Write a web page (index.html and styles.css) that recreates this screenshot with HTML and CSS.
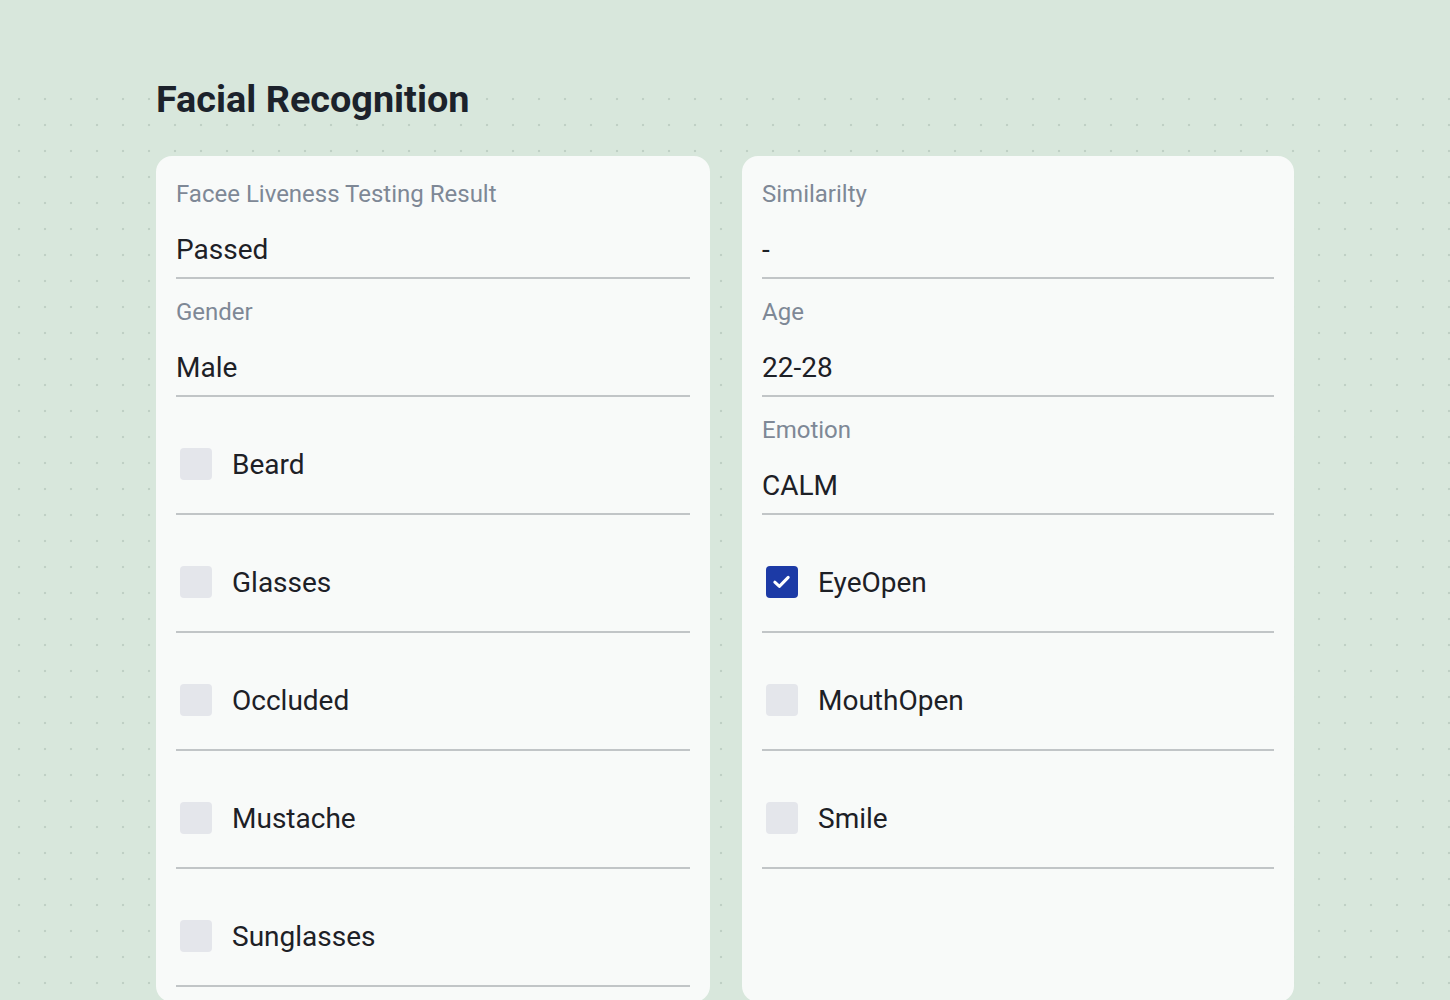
FILE: index.html
```html
<!DOCTYPE html>
<html>
<head>
<meta charset="utf-8">
<link rel="stylesheet" href="styles.css">
</head>
<body>
<div class="dots"></div>
<main class="page">
  <h1 class="title">Facial Recognition</h1>
  <div class="cards">
    <section class="card">
      <div class="field"><div class="label">Facee Liveness Testing Result</div><div class="value">Passed</div></div>
      <div class="field"><div class="label">Gender</div><div class="value">Male</div></div>
      <div class="check"><span class="box"></span><span class="ctext">Beard</span></div>
      <div class="check"><span class="box"></span><span class="ctext">Glasses</span></div>
      <div class="check"><span class="box"></span><span class="ctext">Occluded</span></div>
      <div class="check"><span class="box"></span><span class="ctext">Mustache</span></div>
      <div class="check"><span class="box"></span><span class="ctext">Sunglasses</span></div>
    </section>
    <section class="card">
      <div class="field"><div class="label">Similarilty</div><div class="value">-</div></div>
      <div class="field"><div class="label">Age</div><div class="value">22-28</div></div>
      <div class="field"><div class="label">Emotion</div><div class="value">CALM</div></div>
      <div class="check"><span class="box on"><svg viewBox="0 0 32 32" width="32" height="32"><path d="M8.8 16.2 L13.4 20.4 L22.2 11.4" fill="none" stroke="#fff" stroke-width="3" stroke-linecap="round" stroke-linejoin="round"/></svg></span><span class="ctext">EyeOpen</span></div>
      <div class="check"><span class="box"></span><span class="ctext">MouthOpen</span></div>
      <div class="check"><span class="box"></span><span class="ctext">Smile</span></div>
    </section>
  </div>
</main>
</body>
</html>
```
FILE: styles.css
```css
html, body {
  margin: 0;
  padding: 0;
}
body {
  background: #d8e7dc;
  font-family: Roboto, "Noto Sans", sans-serif;
  height: 1000px;
  overflow: hidden;
  position: relative;
}
.dots {
  position: absolute;
  left: 0;
  right: 0;
  top: 86px;
  bottom: 0;
  background-image: radial-gradient(circle, #bfd0c5 1.1px, transparent 1.6px);
  background-size: 26px 26px;
  background-position: 6px 0px;
}
.page {
  position: relative;
  padding: 75px 156px 0 156px;
}
.title {
  margin: 0;
  font-size: 37.8px;
  font-weight: 700;
  color: #1c222b;
  line-height: 48px;
  height: 48px;
  letter-spacing: 0;
}
.cards {
  margin-top: 33px;
  display: grid;
  grid-template-columns: 554px 552px;
  gap: 32px;
}
.card {
  background: #f8faf9;
  border-radius: 16px;
  padding: 5px 20px 0 20px;
  height: 841px;
}
.field, .check {
  height: 116px;
  border-bottom: 2px solid #c1c5c7;
  box-sizing: content-box;
}
.field {
  display: flex;
  flex-direction: column;
}
.label {
  margin-top: 18px;
  font-size: 24px;
  line-height: 30px;
  color: #7e8896;
}
.value {
  margin-top: 26px;
  font-size: 28px;
  line-height: 30px;
  color: #1d2026;
}
.check {
  display: flex;
  align-items: flex-start;
}
.box {
  margin-top: 51px;
  margin-left: 4px;
  width: 32px;
  height: 32px;
  border-radius: 4px;
  background: #e4e6eb;
  flex: none;
}
.box.on {
  background: #1c3aa6;
}
.box svg {
  display: block;
}
.ctext {
  margin-left: 20px;
  margin-top: 53px;
  font-size: 28px;
  line-height: 30px;
  color: #1d2026;
}
```
